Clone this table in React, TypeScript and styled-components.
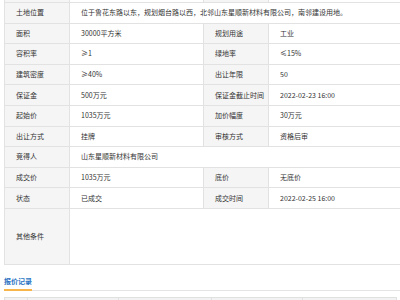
import React from "react";
import styled, { createGlobalStyle } from "styled-components";

const Global = createGlobalStyle`
  html, body { margin: 0; padding: 0; background: #fff; overflow: hidden; }
  body { font-family: "Noto Sans CJK SC", "Noto Sans", sans-serif; color: #333; }
`;

const Page = styled.div`
  width: 398px;
  padding-left: 4px;
  margin-top: -18.6px;
`;

const InfoTable = styled.table`
  width: 398px;
  border-collapse: collapse;
  table-layout: fixed;
  font-size: 7px;
  line-height: 9px;
`;

const Row = styled.tr<{ $h?: number }>`
  height: ${(p) => p.$h ?? 20.6}px;
`;

const Label = styled.td`
  background: #f5f5f5;
  border: 1px solid #e2e2e2;
  padding: 0 0 0 11px;
  color: #333;
  white-space: nowrap;
  vertical-align: middle;
`;

const Value = styled.td`
  background: #fff;
  border: 1px solid #e2e2e2;
  padding: 0 0 0 11px;
  color: #333;
  white-space: nowrap;
  vertical-align: middle;
`;

const SectionHead = styled.div`
  margin-top: 4px;
  height: 21px;
  display: flex;
  align-items: flex-end;
  border-bottom: 1px solid #e4e4e4;
  width: 398px;
`;

const SectionTitle = styled.span`
  font-size: 7px;
  line-height: 9px;
  font-weight: 700;
  color: #2a73c2;
  padding-bottom: 3px;
  border-bottom: 2px solid #f7b54a;
  margin-bottom: -1px;
`;

const BidTable = styled.table`
  margin-top: 6px;
  width: 392px;
  border-collapse: collapse;
  table-layout: fixed;
  font-size: 7px;
  line-height: 9px;
`;

const Head = styled.th`
  background: #f2f2f2;
  border: 1px solid #e0e0e0;
  height: 30px;
  font-weight: 400;
  color: #333;
  vertical-align: middle;
`;

type Pair = [string, string];
const rows: (Pair[] | { full: Pair; h?: number })[] = [
  [["", ""], ["", ""]],
  { full: ["土地位置", "位于鲁花东路以东，规划烟台路以西，北邻山东星顺新材料有限公司，南邻建设用地。"] },
  [["面积", "30000平方米"], ["规划用途", "工业"]],
  [["容积率", "≥1"], ["绿地率", "≤15%"]],
  [["建筑密度", "≥40%"], ["出让年限", "50"]],
  [["保证金", "500万元"], ["保证金截止时间", "2022-02-23 16:00"]],
  [["起始价", "1035万元"], ["加价幅度", "30万元"]],
  [["出让方式", "挂牌"], ["审核方式", "资格后审"]],
  { full: ["竞得人", "山东星顺新材料有限公司"] },
  [["成交价", "1035万元"], ["底价", "无底价"]],
  [["状态", "已成交"], ["成交时间", "2022-02-25 16:00"]],
  { full: ["其他条件", ""], h: 56 },
];

export default function App() {
  return (
    <>
      <Global />
      <Page>
        <InfoTable>
          <colgroup>
            <col style={{ width: 65 }} />
            <col style={{ width: 134 }} />
            <col style={{ width: 65 }} />
            <col style={{ width: 134 }} />
          </colgroup>
          <tbody>
            {rows.map((r, i) =>
              Array.isArray(r) ? (
                <Row key={i}>
                  <Label>{r[0][0]}</Label>
                  <Value>{r[0][1]}</Value>
                  <Label>{r[1][0]}</Label>
                  <Value>{r[1][1]}</Value>
                </Row>
              ) : (
                <Row key={i} $h={r.h}>
                  <Label>{r.full[0]}</Label>
                  <Value colSpan={3}>{r.full[1]}</Value>
                </Row>
              )
            )}
          </tbody>
        </InfoTable>
        <SectionHead>
          <SectionTitle>报价记录</SectionTitle>
        </SectionHead>
        <BidTable>
          <colgroup>
            <col style={{ width: 23 }} />
            <col style={{ width: 91 }} />
            <col style={{ width: 93 }} />
            <col style={{ width: 91 }} />
            <col style={{ width: 94 }} />
          </colgroup>
          <thead>
            <tr>
              <Head>序号</Head>
              <Head>竞买人</Head>
              <Head>报价（万元）</Head>
              <Head>报价时间</Head>
              <Head>报价方式</Head>
            </tr>
          </thead>
        </BidTable>
      </Page>
    </>
  );
}
